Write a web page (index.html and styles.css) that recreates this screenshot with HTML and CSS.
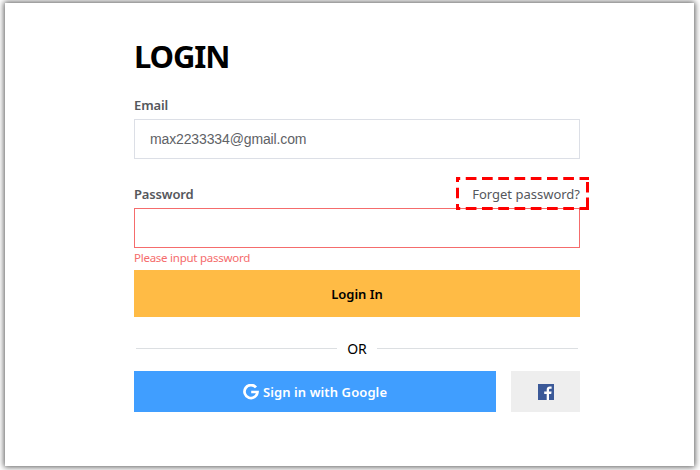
FILE: index.html
```html
<!DOCTYPE html>
<html lang="en">
<head>
<meta charset="utf-8">
<title>Login</title>
<link rel="stylesheet" href="styles.css">
</head>
<body>
<main class="card">
  <form class="form">
    <h1 class="title">LOGIN</h1>
    <label class="label email-label" for="email">Email</label>
    <input class="input" id="email" type="text" value="max2233334@gmail.com">
    <div class="row">
      <label class="label password-label" for="password">Password</label>
      <div class="forget">
        <a class="forget-link">Forget password?</a>
        <svg class="highlight" width="133" height="33" viewBox="0 0 133 33">
          <g fill="none" stroke="#fe0000" stroke-width="3">
            <path d="M0 1.5H133M0 31.5H133" stroke-dasharray="10.7 5.55" stroke-dashoffset="6.5"/>
            <path d="M1.5 0V5M1.5 10.7V21.3M1.5 27V33M131.5 5V15.5M131.5 20.5V33"/>
          </g>
        </svg>
      </div>
    </div>
    <input class="input invalid" id="password" type="password">
    <p class="error"><span class="error-text">Please input password</span></p>
    <button class="login" type="button"><span class="login-text">Login In</span></button>
    <div class="divider"><span class="or">OR</span></div>
    <div class="social">
      <button class="google" type="button">
        <svg width="16" height="16" viewBox="0 0 16 16"><path d="M13 3.4A6.5 6.5 0 1 0 14.5 8H8.2" fill="none" stroke="#fff" stroke-width="2.7"/></svg>
        <span class="google-text">Sign in with Google</span>
      </button>
      <button class="facebook" type="button" aria-label="Facebook">
        <svg width="16" height="16" viewBox="0 0 16 16"><path fill="#3b5998" d="M0 0H16V16H0Z"/><path fill="#fff" d="M8.7 16V10H6.2V7.6H8.7V5.8C8.7 3.6 10 2.5 11.8 2.5H13.6V4.8H12.3C11.3 4.8 11 5.2 11 6V7.6H13.6L13.2 10H11V16Z"/></svg>
      </button>
    </div>
  </form>
</main>
</body>
</html>
```
FILE: styles.css
```css
* { box-sizing: border-box; }
body { margin: 0; padding: 3px 6px 4px 5px; height: 470px; overflow: hidden; background: #fff; font-family: "Noto Sans", sans-serif; }
.card { height: 463px; padding: 33px 114px 0 129px; background: #fff; box-shadow: 0 0 6px 1px rgba(0, 0, 0, .65); }
.form { display: flex; flex-direction: column; }
.title { margin: 0; height: 44px; line-height: 41px; font-size: 31px; font-weight: 700; color: #000; letter-spacing: -1.1px; }
.label { font-size: 13px; font-weight: 600; color: #55575c; line-height: 21px; }
.email-label { margin-top: 15px; height: 24px; letter-spacing: -.1px; }
.input { width: 446px; height: 40px; padding: 0 15px; border: 1px solid #dcdfe6; border-radius: 0; outline: 0; background: #fff; font: 14px "Liberation Sans", sans-serif; letter-spacing: -.13px; color: #606266; }
.row { display: flex; justify-content: space-between; height: 49px; padding-top: 25px; }
.password-label { letter-spacing: -.15px; }
.forget { position: relative; height: 20px; }
.forget-link { display: block; font-size: 13px; line-height: 21px; color: #55575c; }
.highlight { position: absolute; right: -9px; top: -7px; }
.invalid { border-color: #f56c6c; }
.error { margin: 0; height: 22px; line-height: 20px; font-size: 11.5px; color: #f56c6c; }
.error-text { letter-spacing: -.25px; }
.login { height: 47px; padding: 0; border: 0; background: #ffbb45; color: #000; font: 600 13px "Noto Sans", sans-serif; }
.divider { display: flex; align-items: center; gap: 10px; height: 20px; margin: 21px 2px 13px; font-size: 14px; }
.divider::before, .divider::after { content: ""; flex: 1; height: 1px; background: #dcdfe2; }
.or { line-height: 20px; padding-top: 1px; }
.social { display: flex; gap: 15px; height: 41px; }
.social button { display: flex; align-items: center; justify-content: center; border: 0; padding: 0; }
.google { width: 362px; gap: 4px; background: #409eff; color: #fff; font: 600 13px "Noto Sans", sans-serif; }
.google-text { letter-spacing: .1px; padding-top: 1px; }
.facebook { width: 69px; background: #eee; }
```
